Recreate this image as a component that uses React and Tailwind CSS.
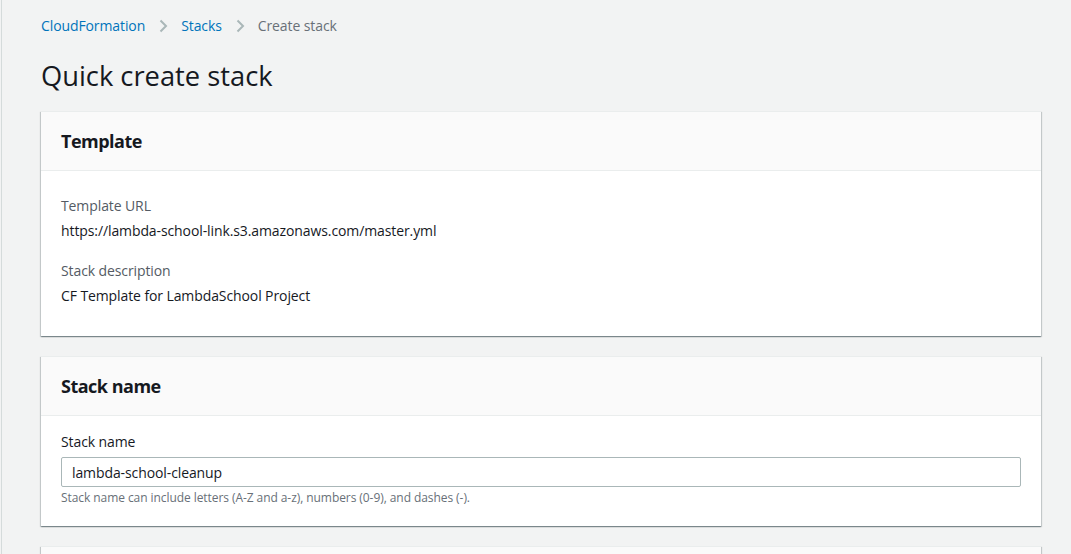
import React from "react";

function Chevron() {
  return (
    <svg width="16" height="16" viewBox="0 0 16 16" className="mx-[10px] shrink-0" aria-hidden="true">
      <path d="M5.5 2.5 L11 8 L5.5 13.5" fill="none" stroke="#aab7b8" strokeWidth="2" />
    </svg>
  );
}

function Card({ title, children, bodyClass }) {
  return (
    <div className="bg-white border-t border-[#eaeded] shadow-[0_1px_1px_0_rgba(0,28,36,0.3),1px_1px_1px_0_rgba(0,28,36,0.15),-1px_1px_1px_0_rgba(0,28,36,0.15)]">
      <div className="bg-[#fafafa] border-b border-[#eaeded] h-[59px] px-[20px] flex items-center">
        {title ? (
          <h2 className="text-[18px] leading-[22px] font-bold tracking-[-0.5px] text-[#16191f]">{title}</h2>
        ) : null}
      </div>
      <div className={bodyClass}>{children}</div>
    </div>
  );
}

export default function App() {
  return (
    <div
      className="min-h-[554px] bg-[#f2f3f3] flex"
      style={{ fontFamily: '"Open Sans", "Noto Sans", Arial, sans-serif' }}
    >
      <div className="w-[2px] border-r border-[#d5dbdb] shrink-0" />
      <div className="flex-1 pl-[39px] pr-[30px]">
        <nav className="h-[52px] flex items-center text-[14px] leading-[20px] tracking-[-0.1px]">
          <span className="text-[#0073bb]">CloudFormation</span>
          <Chevron />
          <span className="text-[#0073bb]">Stacks</span>
          <Chevron />
          <span className="text-[#687078]">Create stack</span>
        </nav>
        <h1 className="text-[27.3px] leading-[36px] text-[#16191f] font-normal mt-[6px] mb-[17px]">
          Quick create stack
        </h1>
        <div className="flex flex-col gap-[20px]">
          <Card title="Template" bodyClass="px-[20px] pt-[24px] pb-[29px] text-[14px] leading-[22px] tracking-[-0.1px]">
            <div className="text-[#545b64]">Template URL</div>
            <div className="text-[#16191f] mt-[3px]">https://lambda-school-link.s3.amazonaws.com/master.yml</div>
            <div className="text-[#545b64] mt-[18px]">Stack description</div>
            <div className="text-[#16191f] mt-[3px]">CF Template for LambdaSchool Project</div>
          </Card>
          <Card title="Stack name" bodyClass="px-[20px] pt-[15px] pb-[20px] tracking-[-0.1px]">
            <div className="text-[14px] leading-[22px] text-[#16191f]">Stack name</div>
            <div className="mt-[4px] h-[30px] border border-[#aab7b8] rounded-[2px] flex items-center px-[10px] text-[14px] text-[#16191f]">
              lambda-school-cleanup
            </div>
            <div className="mt-[3px] text-[12px] leading-[16px] tracking-[-0.07px] text-[#687078]">
              Stack name can include letters (A-Z and a-z), numbers (0-9), and dashes (-).
            </div>
          </Card>
          <Card title="" bodyClass="h-[200px]" />
        </div>
      </div>
    </div>
  );
}
